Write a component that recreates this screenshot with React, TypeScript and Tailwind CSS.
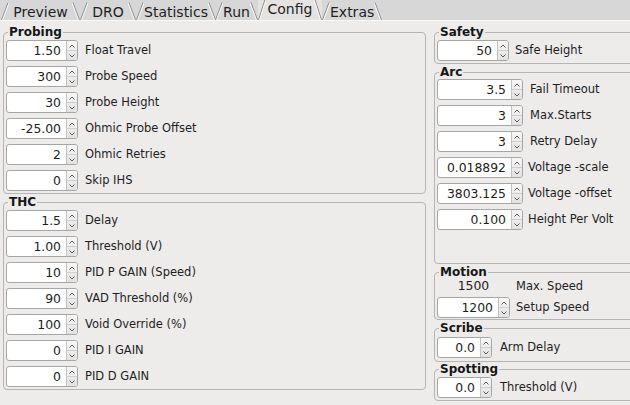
import React from 'react';

const FONT = "font-['DejaVu_Sans',sans-serif]";

function Slant({ side, tall }: { side: 'left' | 'right'; tall: boolean }) {
  const h = tall ? 21 : 18;
  return (
    <svg width="8" height={h} viewBox={`0 0 8 ${h}`} className="shrink-0 block">
      {side === 'left' ? (
        <>
          <line x1="0.5" y1={h} x2="7" y2="0.5" stroke="#8f8f8f" strokeWidth="1" />
          <line x1="1.6" y1={h} x2="8" y2="1.2" stroke="#f7f7f7" strokeWidth="1" />
        </>
      ) : (
        <>
          <line x1="1" y1="0.5" x2="7.5" y2={h} stroke="#8f8f8f" strokeWidth="1" />
          <line x1="0" y1="1.2" x2="6.4" y2={h} stroke="#f7f7f7" strokeWidth="1" />
        </>
      )}
    </svg>
  );
}

function Tab({ label, width, active }: { label: string; width: string; active?: boolean }) {
  return (
    <div className={`flex items-start ${width} ${active ? 'h-[21px] bg-[#e4e3e2]' : 'h-[18px]'}`}>
      <Slant side="left" tall={!!active} />
      <div className="flex-1 whitespace-nowrap pt-[1px] text-center text-[14px] leading-[18px] text-[#1e1e1e]">
        {label}
      </div>
      <Slant side="right" tall={!!active} />
    </div>
  );
}

function Chevron({ up }: { up?: boolean }) {
  return (
    <svg width="6" height="4" viewBox="0 0 6 4" className="block">
      <polyline
        points={up ? '0.5,3.5 3,1 5.5,3.5' : '0.5,0.5 3,3 5.5,0.5'}
        fill="none"
        stroke="#5a5a5a"
        strokeWidth="1"
      />
    </svg>
  );
}

function Spin({ value, width }: { value: string; width: string }) {
  return (
    <div className={`flex h-[21px] shrink-0 overflow-hidden rounded-[3px] border border-[#a6a6a6] bg-white ${width}`}>
      <div className="flex-1 pr-[5px] text-right text-[12.4px] leading-[19px] text-[#1e1e1e]">{value}</div>
      <div className="flex w-[11px] flex-col border-l border-[#c3c3c3] bg-gradient-to-b from-[#f7f7f7] to-[#e2e2e2]">
        <div className="flex flex-1 items-center justify-center border-b border-[#cfcfcf]">
          <Chevron up />
        </div>
        <div className="flex flex-1 items-center justify-center">
          <Chevron />
        </div>
      </div>
    </div>
  );
}

function Row({
  value,
  label,
  width = 'w-[72px]',
  gap = 'ml-[7px]',
}: {
  value: string;
  label: string;
  width?: string;
  gap?: string;
}) {
  return (
    <div className="flex h-[21px] items-center">
      <Spin value={value} width={width} />
      <span className={`${gap} whitespace-nowrap text-[11.5px] text-[#1e1e1e]`}>{label}</span>
    </div>
  );
}

function Legend({ title }: { title: string }) {
  return (
    <legend className="ml-[2px] px-[1px] text-[12px] font-bold leading-[14px] text-[#161616]">{title}</legend>
  );
}

function Group({
  title,
  className,
  body,
  children,
}: {
  title: string;
  className?: string;
  body?: string;
  children: React.ReactNode;
}) {
  return (
    <fieldset className={`rounded-[4px] border border-[#b5b5b3] px-[2px] ${className ?? ''}`}>
      <Legend title={title} />
      <div className={`flex flex-col gap-[5px] ${body ?? ''}`}>{children}</div>
    </fieldset>
  );
}

export default function App() {
  return (
    <div className={`${FONT} h-[405px] w-[630px] overflow-hidden bg-[#edeceb]`}>
      {/* tab bar */}
      <div className="flex h-[21px] items-end border-b border-[#f8f8f8] bg-[#d7d7d7] pl-[1px]">
        <Tab label="Preview" width="w-[79px]" />
        <Tab label="DRO" width="w-[56px]" />
        <Tab label="Statistics" width="w-[79px]" />
        <Tab label="Run" width="w-[43px]" />
        <Tab label="Config" width="w-[64px]" active />
        <Tab label="Extras" width="w-[59px]" />
      </div>

      <div className="flex gap-[8px] pl-[3px] pt-[4px]">
        {/* left column */}
        <div className="flex w-[423px] shrink-0 flex-col gap-[1px]">
          <Group title="Probing" className="pb-[2px]" body="mt-[1px]">
            <Row value="1.50" label="Float Travel" />
            <Row value="300" label="Probe Speed" />
            <Row value="30" label="Probe Height" />
            <Row value="-25.00" label="Ohmic Probe Offset" />
            <Row value="2" label="Ohmic Retries" />
            <Row value="0" label="Skip IHS" />
          </Group>
          <Group title="THC" className="pb-[2px]" body="mt-[1px]">
            <Row value="1.5" label="Delay" />
            <Row value="1.00" label="Threshold (V)" />
            <Row value="10" label="PID P GAIN (Speed)" />
            <Row value="90" label="VAD Threshold (%)" />
            <Row value="100" label="Void Override (%)" />
            <Row value="0" label="PID I GAIN" />
            <Row value="0" label="PID D GAIN" />
          </Group>
        </div>

        {/* right column */}
        <div className="flex w-[210px] shrink-0 flex-col">
          <Group title="Safety" className="pb-[2px]" body="mt-[1px]">
            <Row value="50" label="Safe Height" width="w-[72px]" gap="ml-[6px]" />
          </Group>
          <Group title="Arc" className="mt-[1px] pb-[33px]">
            <Row value="3.5" label="Fail Timeout" width="w-[86px]" />
            <Row value="3" label="Max.Starts" width="w-[86px]" />
            <Row value="3" label="Retry Delay" width="w-[86px]" />
            <Row value="0.018892" label="Voltage -scale" width="w-[86px]" gap="ml-[5px]" />
            <Row value="3803.125" label="Voltage -offset" width="w-[86px]" gap="ml-[5px]" />
            <Row value="0.100" label="Height Per Volt" width="w-[86px]" gap="ml-[5px]" />
          </Group>
          <fieldset className="mt-[1px] rounded-[4px] border border-[#b5b5b3] px-[2px] pb-[1px]">
            <Legend title="Motion" />
            <div className="flex h-[15px] items-center">
              <span className="w-[73px] text-center text-[12.4px] text-[#1e1e1e]">1500</span>
              <span className="ml-[6px] text-[11.5px] text-[#1e1e1e]">Max. Speed</span>
            </div>
            <div className="mt-[3px]">
              <Row value="1200" label="Setup Speed" width="w-[73px]" gap="ml-[6px]" />
            </div>
          </fieldset>
          <Group title="Scribe" className="mt-[1px] pb-[3px]" body="mt-[2px]">
            <Row value="0.0" label="Arm Delay" width="w-[55px]" gap="ml-[8px]" />
          </Group>
          <Group title="Spotting" className="pb-[2px]" body="mt-[1px]">
            <Row value="0.0" label="Threshold (V)" width="w-[55px]" gap="ml-[8px]" />
          </Group>
        </div>
      </div>
    </div>
  );
}
